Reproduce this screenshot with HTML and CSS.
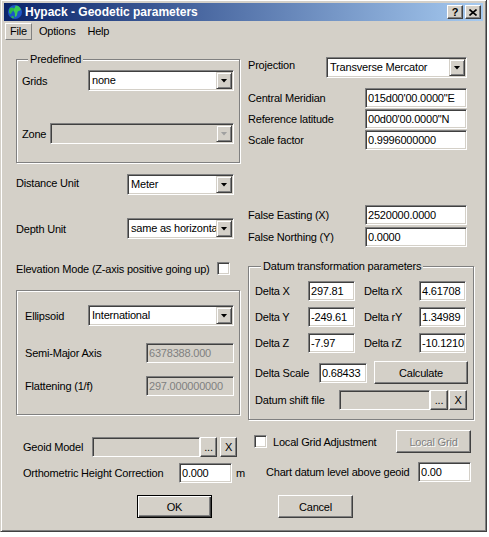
FILE: index.html
```html
<!DOCTYPE html>
<html>
<head>
<meta charset="utf-8">
<title>Hypack - Geodetic parameters</title>
<link rel="stylesheet" href="styles.css">
</head>
<body>
<div class="window">
  <div class="titlebar">
    <svg class="app-icon" viewBox="0 0 16 16">
      <circle cx="8" cy="8" r="7" fill="#1d55c8"/>
      <path d="M2.5 4.5c1.5-1.5 3.5-1.5 4.5 0s-.5 2.5-1.5 3-1 2.5-2 2.5-1.5-2-1.5-3 .5-2 .5-2.5z" fill="#2bb84a"/>
      <path d="M8.5 1.5c2 0 4 1 5 3s-.5 2-2 2.5-1 2.5-1.5 4-1.5 2.5-2 1.5.5-3-.5-4-1-3 0-4.5 1-2.5 1-2.5z" fill="#3acb55"/>
      <path d="M5 12c1 0 2 .5 2 1.5s-1 1-2 .5-1-2 0-2z" fill="#2bb84a"/>
    </svg>
    <span class="title">Hypack - Geodetic parameters</span>
    <div class="caption-buttons">
      <span class="cap-btn">?</span>
      <span class="cap-btn"><svg class="close-x" viewBox="0 0 8 7"><path d="M0.5 0.5l7 6M7.5 0.5l-7 6" stroke="#000" stroke-width="1.6"/></svg></span>
    </div>
  </div>
  <div class="menubar">
    <span class="menu-item active">File</span>
    <span class="menu-item">Options</span>
    <span class="menu-item">Help</span>
  </div>
  <div class="client">
    <div class="col col-left">
      <div class="group group-predefined">
        <span class="legend">Predefined</span>
        <div class="row row-grids">
          <span class="label lbl-grids">Grids</span>
          <div class="combo w146"><span class="combo-value">none</span><span class="combo-arrow"></span></div>
        </div>
        <div class="row row-zone">
          <span class="label lbl-zone">Zone</span>
          <div class="combo disabled w184"><span class="combo-value"></span><span class="combo-arrow"></span></div>
        </div>
      </div>
      <div class="row row-distance">
        <span class="label lift">Distance Unit</span>
        <div class="combo w107"><span class="combo-value">Meter</span><span class="combo-arrow"></span></div>
      </div>
      <div class="row row-depth">
        <span class="label">Depth Unit</span>
        <div class="combo w107"><span class="combo-value">same as horizontal</span><span class="combo-arrow"></span></div>
      </div>
      <div class="row row-elev">
        <span class="label">Elevation Mode (Z-axis positive going up)</span>
        <span class="check"></span>
      </div>
      <div class="group group-ellipsoid">
        <div class="row row-ellipsoid">
          <span class="label">Ellipsoid</span>
          <div class="combo w146"><span class="combo-value">International</span><span class="combo-arrow"></span></div>
        </div>
        <div class="row row-semi">
          <span class="label">Semi-Major Axis</span>
          <div class="edit disabled w88">6378388.000</div>
        </div>
        <div class="row row-flat">
          <span class="label">Flattening (1/f)</span>
          <div class="edit disabled w88">297.000000000</div>
        </div>
      </div>
      <div class="row row-geoid">
        <span class="label lbl-geoid">Geoid Model</span>
        <div class="edit disabled w108"></div>
        <span class="btn small btn-dots">...</span>
        <span class="btn small btn-x">X</span>
      </div>
      <div class="row row-ortho">
        <span class="label lbl-ortho">Orthometric Height Correction</span>
        <div class="edit w53">0.000</div>
        <span class="unit">m</span>
      </div>
      <div class="row row-ok">
        <span class="btn default btn-ok">OK</span>
      </div>
    </div>

    <div class="col col-right">
      <div class="row row-projection">
        <span class="label lift-more">Projection</span>
        <div class="combo w141"><span class="combo-value">Transverse Mercator</span><span class="combo-arrow"></span></div>
      </div>
      <div class="row row-cm">
        <span class="label">Central Meridian</span>
        <div class="edit w102">015d00'00.0000"E</div>
      </div>
      <div class="row row-rl">
        <span class="label">Reference latitude</span>
        <div class="edit w102">00d00'00.0000"N</div>
      </div>
      <div class="row row-sf">
        <span class="label">Scale factor</span>
        <div class="edit w102">0.9996000000</div>
      </div>
      <div class="row row-fe">
        <span class="label">False Easting (X)</span>
        <div class="edit w102">2520000.0000</div>
      </div>
      <div class="row row-fn">
        <span class="label">False Northing (Y)</span>
        <div class="edit w102">0.0000</div>
      </div>
      <div class="group group-datum">
        <span class="legend">Datum transformation parameters</span>
        <div class="delta-grid">
          <span class="label">Delta X</span>
          <div class="edit">297.81</div>
          <span class="label lbl-r">Delta rX</span>
          <div class="edit">4.61708</div>
          <span class="label">Delta Y</span>
          <div class="edit">-249.61</div>
          <span class="label lbl-r">Delta rY</span>
          <div class="edit">1.34989</div>
          <span class="label">Delta Z</span>
          <div class="edit">-7.97</div>
          <span class="label lbl-r">Delta rZ</span>
          <div class="edit">-10.1210</div>
        </div>
        <div class="row row-scale">
          <span class="label lbl-scale">Delta Scale</span>
          <div class="edit w48">0.68433</div>
          <span class="btn btn-calc">Calculate</span>
        </div>
        <div class="row row-shift">
          <span class="label lbl-shift">Datum shift file</span>
          <div class="edit disabled w91"></div>
          <span class="btn small btn-dots2">...</span>
          <span class="btn small btn-x2">X</span>
        </div>
      </div>
      <div class="row row-localgrid">
        <span class="check"></span>
        <span class="label lbl-local">Local Grid Adjustment</span>
        <span class="btn disabled btn-local">Local Grid</span>
      </div>
      <div class="row row-chart">
        <span class="label">Chart datum level above geoid</span>
        <div class="edit w53">0.00</div>
      </div>
      <div class="row row-cancel">
        <span class="btn btn-cancel">Cancel</span>
      </div>
    </div>
  </div>
</div>
</body>
</html>
```

FILE: styles.css
```css
* { box-sizing: border-box; }
html, body { margin: 0; padding: 0; }
body {
  background: #fff;
  font-family: "Liberation Sans", Arial, sans-serif;
  font-size: 11px;
  letter-spacing: -0.2px;
  color: #000;
}

/* window frame */
.window {
  width: 487px;
  height: 533px;
  margin-top: -1px;
  background: #d4d0c8;
  border: 1px solid;
  border-color: #d4d0c8 #404040 #404040 #d4d0c8;
  box-shadow: inset 1px 1px #fff, inset -1px -1px #808080;
  padding: 3px;
  display: flex;
  flex-direction: column;
}

.titlebar {
  height: 18px;
  flex: none;
  display: flex;
  align-items: center;
  background: linear-gradient(to right, #0a246a, #a6caf0);
  padding: 0 2px 0 3px;
}
.app-icon { width: 16px; height: 16px; flex: none; }
.title {
  flex: 1;
  margin-left: 2px;
  color: #fff;
  font-weight: bold;
  font-size: 12px;
  letter-spacing: 0;
  white-space: nowrap;
}
.caption-buttons { display: flex; gap: 2px; }
.cap-btn {
  width: 16px;
  height: 14px;
  background: #d4d0c8;
  border: 1px solid;
  border-color: #fff #404040 #404040 #fff;
  box-shadow: inset -1px -1px #808080;
  display: flex;
  align-items: center;
  justify-content: center;
  font-weight: bold;
  font-size: 11px;
  letter-spacing: 0;
  line-height: 12px;
}
.close-x { width: 8px; height: 7px; }

.menubar {
  height: 20px;
  flex: none;
  display: flex;
  align-items: center;
  gap: 2px;
  padding-left: 1px;
}
.menu-item {
  padding: 0 4px;
  border: 1px solid transparent;
  line-height: 15px;
}
.menu-item.active { border-color: #fff #808080 #808080 #fff; }

.client {
  flex: 1;
  display: flex;
  gap: 8px;
  padding-left: 12px;
}
.col { display: flex; flex-direction: column; }
.col-left { width: 224px; }
.col-right { width: 226px; }

/* group boxes */
.group {
  display: flex;
  flex-direction: column;
  flex: none;
  border: 1px solid #808080;
  box-shadow: 1px 1px 0 #fff, inset 1px 1px 0 #fff;
}
.legend {
  align-self: flex-start;
  margin: -7px 0 0 6px;
  padding: 0 2px;
  background: #d4d0c8;
  line-height: 13px;
  white-space: nowrap;
}

.row { display: flex; align-items: center; flex: none; }
.label { flex: none; white-space: nowrap; }
.lift { margin-bottom: 4px; }
.lift-more { margin-bottom: 6px; }

/* controls */
.edit {
  flex: none;
  height: 20px;
  background: #fff;
  border: 1px solid;
  border-color: #808080 #fff #fff #808080;
  box-shadow: inset 1px 1px #404040, inset -1px -1px #d4d0c8;
  padding: 0 2px;
  line-height: 18px;
  white-space: nowrap;
  overflow: hidden;
}
.edit.disabled { background: #d4d0c8; color: #808080; }

.combo {
  flex: none;
  height: 21px;
  display: flex;
  background: #fff;
  border: 1px solid;
  border-color: #808080 #fff #fff #808080;
  box-shadow: inset 1px 1px #404040, inset -1px -1px #d4d0c8;
  padding: 1px;
}
.combo-value {
  flex: 1;
  min-width: 0;
  padding-left: 2px;
  line-height: 17px;
  white-space: nowrap;
  overflow: hidden;
}
.combo-arrow {
  width: 16px;
  flex: none;
  background: #d4d0c8;
  border: 1px solid;
  border-color: #d4d0c8 #404040 #404040 #d4d0c8;
  box-shadow: inset 1px 1px #fff, inset -1px -1px #808080;
  display: flex;
  align-items: center;
  justify-content: center;
}
.combo-arrow::after {
  content: "";
  width: 7px;
  height: 4px;
  background: #000;
  clip-path: polygon(0 0, 100% 0, 50% 100%);
}
.combo.disabled { background: #d4d0c8; }
.combo.disabled .combo-arrow::after { background: #a0a0a0; }

.btn {
  flex: none;
  height: 23px;
  background: #d4d0c8;
  border: 1px solid;
  border-color: #fff #404040 #404040 #fff;
  box-shadow: inset -1px -1px #808080;
  display: flex;
  align-items: center;
  justify-content: center;
  white-space: nowrap;
}
.btn.default {
  border-color: #000;
  box-shadow: inset 1px 1px #fff, inset -1px -1px #404040, inset -2px -2px #808080;
}
.btn.disabled { color: #808080; text-shadow: 1px 1px #fff; }
.btn.small { height: 20px; }

.check {
  flex: none;
  width: 13px;
  height: 13px;
  background: #fff;
  border: 1px solid;
  border-color: #808080 #fff #fff #808080;
  box-shadow: inset 1px 1px #404040, inset -1px -1px #d4d0c8;
}

/* widths */
.w53 { width: 53px; }
.w48 { width: 48px; }
.w88 { width: 88px; }
.w91 { width: 91px; }
.w102 { width: 102px; }
.w107 { width: 107px; }
.w108 { width: 108px; }
.w141 { width: 141px; }
.w146 { width: 146px; }
.w184 { width: 184px; }

/* left column */
.group-predefined { margin-top: 18px; height: 104px; padding: 0 5px; }
.row-grids { margin-top: 4px; height: 21px; justify-content: space-between; }
.row-zone { margin-top: 32px; height: 21px; justify-content: space-between; }

.row-distance { margin-top: 11px; height: 21px; justify-content: space-between; padding-right: 6px; }
.row-depth { margin-top: 23px; height: 21px; justify-content: space-between; padding-right: 6px; }
.row-elev { margin-top: 23px; height: 13px; justify-content: space-between; padding-right: 10px; }

.group-ellipsoid { margin-top: 15px; height: 125px; padding: 14px 5px 0 8px; }
.row-ellipsoid { height: 21px; justify-content: space-between; }
.row-semi { margin-top: 17px; height: 20px; justify-content: space-between; }
.row-flat { margin-top: 13px; height: 20px; justify-content: space-between; }

.row-geoid { margin-top: 22px; height: 20px; padding-left: 7px; }
.lbl-geoid { width: 69px; }
.btn-dots { width: 17px; }
.btn-x { width: 17px; margin-left: 3px; }

.row-ortho { margin-top: 6px; height: 20px; padding-left: 7px; }
.lbl-ortho { width: 156px; }
.unit { margin-left: 4px; }

.row-ok { margin-top: 12px; }
.btn-ok { width: 75px; margin-left: 121px; }

/* right column */
.row-projection { margin-top: 16px; height: 21px; justify-content: space-between; padding-right: 7px; }
.row-cm { margin-top: 10px; height: 20px; justify-content: space-between; padding-right: 7px; }
.row-rl, .row-sf { margin-top: 1px; height: 20px; justify-content: space-between; padding-right: 7px; }
.row-fe { margin-top: 55px; height: 20px; justify-content: space-between; padding-right: 7px; }
.row-fn { margin-top: 2px; height: 20px; justify-content: space-between; padding-right: 7px; }

.group-datum { margin-top: 19px; height: 154px; padding: 0 0 0 6px; }
.delta-grid {
  margin-top: 8px;
  display: grid;
  grid-template-columns: 53px 47px 64px 47px;
  grid-auto-rows: 20px;
  row-gap: 6px;
  align-items: center;
}
.lbl-r { padding-left: 9px; }
.row-scale { margin-top: 8px; height: 23px; }
.lbl-scale { width: 64px; }
.btn-calc { width: 94px; margin-left: 7px; }
.row-shift { margin-top: 6px; height: 20px; }
.lbl-shift { width: 84px; }
.btn-dots2 { width: 18px; }
.btn-x2 { width: 18px; margin-left: 1px; }

.row-localgrid { margin-top: 10px; height: 23px; padding-left: 6px; padding-right: 3px; }
.lbl-local { margin-left: 6px; }
.btn-local { width: 75px; margin-left: auto; }

.row-chart { margin-top: 9px; height: 20px; padding-left: 18px; padding-right: 3px; justify-content: space-between; }

.row-cancel { margin-top: 13px; }
.btn-cancel { width: 75px; margin-left: 30px; }
```
